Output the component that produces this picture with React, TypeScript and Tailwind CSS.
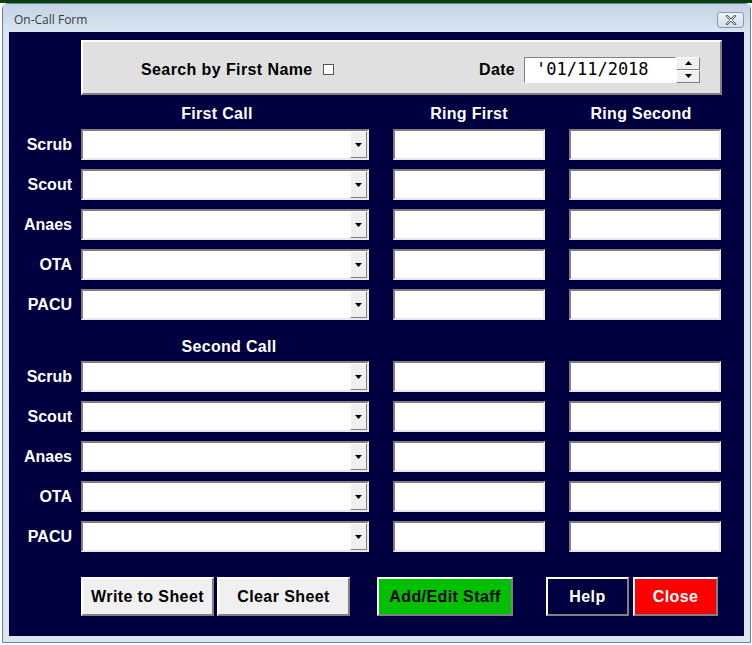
import React from "react";

const FONT = { fontFamily: '"Liberation Sans", Arial, sans-serif' };

const ROLES = ["Scrub", "Scout", "Anaes", "OTA", "PACU"];

function Combo() {
  return (
    <div className="flex h-[31px] w-[288px] border-2 border-t-[#808080] border-l-[#808080] border-b-[#e8e8e8] border-r-[#e8e8e8] bg-white">
      <div className="flex-1" />
      <div className="flex w-[17px] items-center justify-center border border-t-white border-l-white border-b-[#808080] border-r-[#808080] bg-[#f0f0f0]">
        <svg width="7" height="4" viewBox="0 0 7 4">
          <path d="M0 0h7L3.5 4z" fill="#000" />
        </svg>
      </div>
    </div>
  );
}

function TextBox() {
  return (
    <div className="h-[31px] w-[152px] border-2 border-t-[#808080] border-l-[#808080] border-b-[#e8e8e8] border-r-[#e8e8e8] bg-white" />
  );
}

function Row({ label }: { label: string }) {
  return (
    <div className="flex h-[31px] items-center">
      <div className="w-[72px] pr-[9px] text-right text-[16px] font-bold text-white">{label}</div>
      <Combo />
      <div className="w-[24px]" />
      <TextBox />
      <div className="w-[24px]" />
      <TextBox />
    </div>
  );
}

function Btn({
  children,
  className,
}: {
  children: React.ReactNode;
  className: string;
}) {
  return (
    <div
      className={
        "flex h-[39px] items-center justify-center border-2 border-t-white border-l-white border-b-[#808080] border-r-[#808080] text-[16px] font-bold tracking-[0.4px] " +
        className
      }
    >
      {children}
    </div>
  );
}

export default function App() {
  return (
    <div className="h-[645px] w-[752px] overflow-hidden bg-white" style={FONT}>
      <div className="h-[3px] bg-[#0b3d12]" />
      <div className="ml-[2px] mr-[1px] flex h-[640px] flex-col rounded-t-[6px] border border-[#6e7f93] bg-[#dbe6f2]">
        {/* title bar */}
        <div className="flex h-[28px] items-center bg-gradient-to-b from-[#c3d3e4] to-[#d9e5f1] pl-[11px] pr-[4px] pt-[4px]">
          <span className="flex-1 text-[12px] text-[#3b3b3b]" style={{ fontFamily: '"Open Sans", "Liberation Sans", sans-serif' }}>
            On-Call Form
          </span>
          <div className="mr-[2px] flex h-[16px] w-[27px] items-center justify-center rounded-[3px] border border-[#8a9aae] bg-gradient-to-b from-[#eef3f8] to-[#d3dde8]">
            <svg width="12" height="10" viewBox="0 0 12 10">
              <path d="M2 1l8 8M10 1L2 9" stroke="#4a5462" strokeWidth="2.4" strokeLinecap="round" />
              <path d="M2 1l8 8M10 1L2 9" stroke="#fff" strokeWidth="0.9" strokeLinecap="round" />
            </svg>
          </div>
        </div>

        {/* body */}
        <div className="mx-[6px] flex h-[604px] flex-col bg-[#000040]">
          <div className="ml-[72px] mt-[8px] flex h-[55px] w-[641px] items-center border-2 border-t-white border-l-white border-b-[#808080] border-r-[#808080] bg-[#e0e0e0] pt-[4px]">
            <span className="ml-[58px] text-[16px] font-bold tracking-[0.4px] text-black">Search by First Name</span>
            <div className="ml-[10px] h-[11px] w-[11px] border border-[#555] bg-white" />
            <span className="ml-auto text-[16px] font-bold tracking-[0.3px] text-black">Date</span>
            <div className="ml-[9px] flex h-[26px] w-[152px] items-center border border-t-[#808080] border-l-[#808080] border-b-white border-r-white bg-white pl-[11px]">
              <span className="text-[17px] text-black" style={{ fontFamily: '"DejaVu Sans Mono", monospace' }}>
                '01/11/2018
              </span>
            </div>
            <div className="mr-[20px] flex h-[26px] w-[24px] flex-col">
              <div className="flex flex-1 items-center justify-center border border-t-white border-l-white border-b-[#808080] border-r-[#808080] bg-[#f0f0f0]">
                <svg width="7" height="4" viewBox="0 0 7 4">
                  <path d="M0 4h7L3.5 0z" fill="#000" />
                </svg>
              </div>
              <div className="flex flex-1 items-center justify-center border border-t-white border-l-white border-b-[#808080] border-r-[#808080] bg-[#f0f0f0]">
                <svg width="7" height="4" viewBox="0 0 7 4">
                  <path d="M0 0h7L3.5 4z" fill="#000" />
                </svg>
              </div>
            </div>
          </div>

          {/* headers */}
          <div className="flex h-[34px] items-center pt-[3px] text-[16px] font-bold tracking-[0.3px] text-white">
            <div className="w-[72px]" />
            <div className="w-[288px] pr-[16px] text-center">First Call</div>
            <div className="w-[24px]" />
            <div className="w-[152px] text-center">Ring First</div>
            <div className="w-[24px]" />
            <div className="w-[152px] pr-[8px] text-center">Ring Second</div>
          </div>

          <div className="flex flex-col gap-[9px]">
            {ROLES.map((r) => (
              <Row key={"a" + r} label={r} />
            ))}
          </div>

          <div className="flex h-[41px] items-center pt-[13px] text-[16px] font-bold tracking-[0.3px] text-white">
            <div className="w-[72px]" />
            <div className="w-[288px] pl-[8px] text-center">Second Call</div>
          </div>

          <div className="flex flex-col gap-[9px]">
            {ROLES.map((r) => (
              <Row key={"b" + r} label={r} />
            ))}
          </div>

          <div className="ml-[72px] mt-[25px] flex items-center">
            <Btn className="w-[133px] bg-[#f0f0f0] text-black">Write to Sheet</Btn>
            <Btn className="ml-[3px] w-[133px] bg-[#f0f0f0] text-black">Clear Sheet</Btn>
            <Btn className="ml-[27px] w-[136px] bg-[#00c000] text-black">Add/Edit Staff</Btn>
            <Btn className="ml-[33px] w-[83px] bg-[#000040] text-white">Help</Btn>
            <Btn className="ml-[4px] w-[85px] bg-[#ff0000] text-white">Close</Btn>
          </div>
        </div>
      </div>
    </div>
  );
}
